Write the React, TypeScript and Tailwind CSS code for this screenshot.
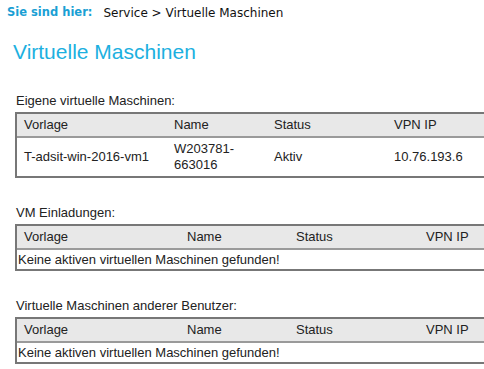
import React from 'react';

interface VmRow {
    vorlage: string;
    name: React.ReactNode;
    status: string;
    ip: string;
}

const ownRows: VmRow[] = [
    {vorlage: 'T-adsit-win-2016-vm1', name: <>W203781-<br/>663016</>, status: 'Aktiv', ip: '10.76.193.6'},
];

// tables are wider than the window and get cut at the right edge
const TableFrame: React.FC<{title: string; header: React.ReactNode; children: React.ReactNode}> = ({title, header, children}) => (
    <div className="ml-[15px]">
        <div className="pl-[1px] text-[13px] leading-[16px] text-[#222]">{title}</div>
        <div className="mt-[3px] w-[600px] border-l-2 border-t-2 border-b-2 border-[#777]">
            <div className="flex h-[24px] items-center bg-[#e8e8e8] border-b-2 border-[#9a9a9a] text-[13px] text-[#222]">
                {header}
            </div>
            {children}
        </div>
    </div>
);

const OwnTable: React.FC = () => (
    <TableFrame
        title="Eigene virtuelle Maschinen:"
        header={<>
            <div className="pl-[7px] w-[157px]">Vorlage</div>
            <div className="w-[100px]">Name</div>
            <div className="w-[120px]">Status</div>
            <div>VPN IP</div>
        </>}
    >
        {ownRows.map((r, i) => (
            <div key={i} className="flex h-[38px] items-center text-[13px] leading-[16px] text-[#222]">
                <div className="pl-[7px] w-[157px]">{r.vorlage}</div>
                <div className="w-[100px]">{r.name}</div>
                <div className="w-[120px]">{r.status}</div>
                <div>{r.ip}</div>
            </div>
        ))}
    </TableFrame>
);

const EmptyTable: React.FC<{title: string}> = ({title}) => (
    <TableFrame
        title={title}
        header={<>
            <div className="pl-[7px] w-[170px]">Vorlage</div>
            <div className="w-[109px]">Name</div>
            <div className="w-[130px]">Status</div>
            <div>VPN IP</div>
        </>}
    >
        <div className="h-[19px] pl-[1px] text-[13px] leading-[19px] text-[#222]">Keine aktiven virtuellen Maschinen gefunden!</div>
    </TableFrame>
);

export default function App() {
    return (
        <div className="w-[484px] h-[369px] overflow-hidden bg-white font-['Liberation_Sans',Arial,sans-serif]">
            <div className="flex items-center h-[26px] pl-[7px] font-['DejaVu_Sans',Verdana,sans-serif]">
                <span className="text-[11.5px] font-bold text-[#1a9fd4]">Sie sind hier:</span>
                <span className="ml-[11px] text-[12px] text-[#111]">Service &gt; Virtuelle Maschinen</span>
            </div>
            <h1 className="mt-[14px] ml-[13px] text-[21px] leading-[24px] text-[#1cb0e0]">Virtuelle Maschinen</h1>
            <div className="mt-[29px]">
                <OwnTable/>
            </div>
            <div className="mt-[27px]">
                <EmptyTable title="VM Einladungen:"/>
            </div>
            <div className="mt-[27px]">
                <EmptyTable title="Virtuelle Maschinen anderer Benutzer:"/>
            </div>
        </div>
    );
}
